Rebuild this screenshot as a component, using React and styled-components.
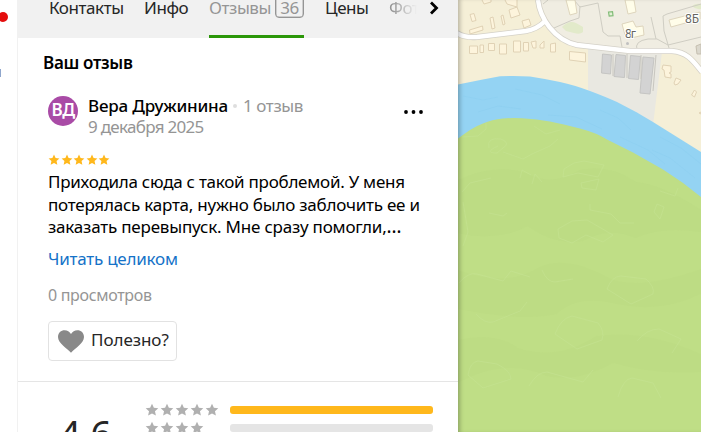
import React from "react";
import styled, { createGlobalStyle } from "styled-components";

const STAR = "M12 1.2l3.2 7 7.6.8-5.7 5.1 1.6 7.5L12 17.8l-6.7 3.8 1.6-7.5L1.2 9l7.6-.8z";
const ROAD = "M457 33Q464 38 477 37L526 31Q537 29 544 22M538 0C540 18 554 40 577 45L630 51H672C686 52 692 59 702 72";

const Stars = ({ count, size, gap, color }) => (
  <StarRow $gap={gap}>
    {Array.from({ length: count }, (_, i) => (
      <svg key={i} width={size} height={size} viewBox="0 0 24 24" fill={color}>
        <path d={STAR} />
      </svg>
    ))}
  </StarRow>
);

const Map = () => (
  <MapSvg viewBox="458 0 243 432">
    <rect x="458" width="243" height="432" fill="#f5efd7" />
    <path d="M540 0H701V66Q690 50 677 51L630 51L575 45Q550 35 540 0z" fill="#f0ede2" />
    <path d="M588 46L662 52L653 125L588 92z" fill="#e9e8e1" />
    <path d="M562 27q7-7 14-4l7 4v5q-3 3-9 1l-8-2zM692 6q4-3 9-2v5q-5 1-9-3z" fill="#e2eaca" />
    <path d="M458 84.500Q480 80 500 76.300Q515 75.500 530 76.500Q546 79 560 82T590 91T617 102L637 112.500L653 122L701 152V200H458z" fill="#94d3f3" />
    <g fill="none" stroke="#87caee" strokeWidth="1" opacity=".35">
      <path d="M463 96l20 4 15-3M478 112l20-6 23 3M515 89l27 6 18 9M548 115l28 2 26 12M600 110l18 8 13 12M620 137l28 13 17 14M652 150l18 8 25 20M660 137l21 11 20 16" />
    </g>
    <path d="M458 138.500Q464 134 470 130T483 123.500Q492 119.500 503 118.500T522 118.300Q537 119 550 121.500T580 128.500T607 139.500L633 152.500L663 169.500Q683 182 701 197V432H458z" fill="#bfde86" />
    <g fill="#b8d77f" opacity=".25">
      <path d="M458 180q40-18 70-6 25 13 52-4 30-6 56 12 25 2 65 28v22q-40-6-65 6-28-12-53 3-30 4-55-15-30 16-70 7z" />
      <path d="M458 270q50 18 81-3 28-12 68 10 28 15 94-8v25q-42 20-84 10-40-10-60 10-32 8-99-5z" />
      <path d="M458 340q38-9 60 8 40 13 78-12 50-7 105 18v18q-48 3-88-9-36 20-67 13-40-19-88 7z" />
    </g>
    <g fill="none" stroke="#c8e497" strokeWidth="1" strokeLinejoin="round" opacity=".45">
      <path d="M486 123v6l-8 7-16 1M489 148q-3-11 12-9 10 4 2 9l-6 5q-14 0 1-7M503 152l20 7 9-5 18-8 8-7M534 126l12 8 14-4M462 192l8-9 21-5M520 178l2-8 9 5M532 184l3-10 7 8M564 169l10-6 10-2 20 4-6 12-20-4-15 4zM581 183l18-4-3 11-14-2zM590 204v6l21 4 9 9h14M657 204l7 3-4 12-6-7zM558 229l14-8 15-1 26 15-10 7-17-7-14 8-13-5zM463 202l5 30-5 14M489 213l14 3 4-3M660 191l15 5 3-8" />
      <path d="M459 283q9-11 18-9l26 7 8-10 19 6M542 270q5 12 13 12l18-3M607 289q5-13 14-13l25 3q9 8 7 15l-22 10zM476 314q9 10 17 8l27-11 7-9M555 334q6-16 17-18l26 7q7 8 4 17l-25 9zM637 341q10-12 22-12l22 10-9 14M468 375q2-13 10-14l19 3q14 7 14 15l-28 9zM529 386q8-14 18-14l36 10 10-12M618 397q5-18 14-19l21 5 8 15" />
    </g>
    <g fill="none" stroke="#cfcdc3" strokeWidth="1">
      <path d="M543 4l5-4M554 28l16-7 9-3 1-12M574 0l6 7 18-4 5 29 5 4 12 0 2 11M651 17l5 22M663 16l4-2 34-10M663 16l1 15 5 17M637 50q-3-9 11-11h9l11 6 33-8" />
    </g>
    <g fill="none">
      <path d={ROAD} stroke="#d4d1c8" strokeWidth="6" />
      <path d={ROAD} stroke="#fff" strokeWidth="4.400" />
    </g>
    <g fill="#fdf4dc" stroke="#e0d2b5" strokeWidth="1">
      <path d="M470 14.500l4-1 2 7-4 1zM482 0l2 4 7-2v-2M505 0l2 4 10 3v-7M509 10l8-3 3 8-9 3zM490 18l3-1 2 11-3 1zM501 16l2-1 2 9-2 1zM522 21l7-2 2 6-7 3zM469.500 30l13-4 .5 4-13 4z" />
      <path d="M469.500 46h8v7.500h-8zM480 45h3.500v7.500h-3.500zM488.500 43.500h6v7h-6zM499.500 44h7v10h-7zM513.500 41h7v11h-7zM523.500 42.500h5v8.500h-5zM531 42l5-1v7h-3zM540 45l4-4v7h-4zM550.500 44l5-1v9h-5z" />
      <path d="M569.500 51.500l16 1.500v9l-16-2zM663 65l8 1v6l-2 1 2 1v4l-6-1-1-7-2-1zM674 83l2-5 5 2-3 4-3 1zM691.500 95l3-5 2 2-2 5zM699 113l2-1v2z" />
    </g>
    <g fill="#fffde9" stroke="#ded5bd">
      <path d="M566 0l4 15 7-2-2-13zM625 0l3 14 8-2-2-12zM622 24l11-3 3 6 7-1 1 9-13 3-6-3zM669 20l31-8v7l-29 8z" />
    </g>
    <g fill="#d3d3d3" stroke="#c5c5c3">
      <path d="M602.500 54l9 1-1 19-9-1zM616 54.500l9.500 1-1 22-10.500-1zM630.500 55.500l10 1-2 23-10-1zM643 57l11 1-4 36-10-1z" />
    </g>
    <path d="M613 54v22M627 54v24M641 55v24M656 55l-3 36" fill="none" stroke="#c8c6bf" />
    <path d="M608.500 12l4-.3.500 4-3.800.3z" fill="#e3efd5" stroke="#82bd78" strokeWidth="1.200" />
    <circle cx="627.500" cy="43.500" r="1.500" fill="#c0c0c0" />
    <path d="M696 46l5-2v10l-4 0z" fill="#dbd8cd" stroke="#c5bfb0" />
    <g fill="#66665f" stroke="#fff" strokeWidth="2" paintOrder="stroke" fontFamily="Noto Sans, sans-serif" fontSize="12">
      <text x="625" y="37.500" textLength="11">8г</text>
      <text x="685" y="23" textLength="14">8Б</text>
    </g>
  </MapSvg>
);

const App = () => {
  return (
    <>
      <GlobalStyle />
      <Page>
        <Rail>
          <RedDot />
          <RailMark />
        </Rail>
        <Panel>
          <Tabs>
            <Tab $w={75}>Контакты</Tab>
            <Tab $w={45}>Инфо</Tab>
            <Tab $w={95} $active>
              Отзывы<Count>36</Count>
            </Tab>
            <Tab $w={44}>Цены</Tab>
            <Tab $w={28} $faded>Фото</Tab>
            <Arrow width="10" height="14" viewBox="0 0 10 14">
              <path d="M2 1.500L7.500 7 2 12.500" fill="none" stroke="#000" strokeWidth="2.800" />
            </Arrow>
          </Tabs>
          <Heading>Ваш отзыв</Heading>
          <Review>
            <Author>
              <Avatar>ВД</Avatar>
              <AuthorInfo>
                <NameLine>
                  <Name>Вера Дружинина</Name>
                  <Dot />
                  <Muted $ls={-0.4}>1 отзыв</Muted>
                </NameLine>
                <Muted $ls={-0.7}>9 декабря 2025</Muted>
              </AuthorInfo>
              <More width="20" height="6" viewBox="0 0 20 6">
                <circle cx="3" cy="3" r="1.900" />
                <circle cx="10.500" cy="3" r="1.900" />
                <circle cx="18" cy="3" r="1.900" />
              </More>
            </Author>
            <Stars count={5} size={12} gap={0.6} color="#ffb81c" />
            <Text>
              <Line $ls={-0.25}>Приходила сюда с такой проблемой. У меня</Line>
              <Line $ls={-0.23}>потерялась карта, нужно было заблочить ее и</Line>
              <Line $ls={-0.2}>
                заказать перевыпуск. Мне сразу помогли,<Ellipsis>…</Ellipsis>
              </Line>
            </Text>
            <ReadMore>Читать целиком</ReadMore>
            <Views>0 просмотров</Views>
            <Useful>
              <svg width="26" height="23" viewBox="0 0 26 23" fill="#898989">
                <path d="M13 22.700C9 18.500 0 13 0 7 0 2.900 3 .3 6.600.3c2.700 0 5 1.500 6.400 3.700C14.400 1.800 16.700.3 19.400.3 23 .3 26 2.900 26 7c0 6-9 11.500-13 15.700z" />
              </svg>
              <span>Полезно?</span>
            </Useful>
          </Review>
          <Summary>
            <Rating>4.6</Rating>
            <Bars>
              <BarRow>
                <Stars count={5} size={14} gap={0.9} color="#b0b0b0" />
                <Bar $color="#ffb81c" />
              </BarRow>
              <BarRow>
                <Stars count={4} size={14} gap={0.9} color="#b0b0b0" />
                <Bar $color="#e5e5e5" />
              </BarRow>
            </Bars>
          </Summary>
        </Panel>
        <MapArea>
          <Map />
        </MapArea>
      </Page>
    </>
  );
};

export default App;

const GlobalStyle = createGlobalStyle`
  * {
    box-sizing: border-box;
  }

  body {
    margin: 0;
    overflow: hidden;
    font-family: "Noto Sans", "Open Sans", sans-serif;
    font-size: 17px;
    color: #000;
    background: #fff;
  }

  svg {
    display: block;
    flex: none;
  }
`;

const Page = styled.div`
  display: flex;
  width: 701px;
  height: 432px;
  overflow: hidden;
`;

const Rail = styled.div`
  width: 18px;
  flex: none;
  overflow: hidden;
  border-right: 1px solid #f1f1f1;
  padding-top: 12px;
`;

const RedDot = styled.div`
  width: 10px;
  height: 10px;
  border-radius: 50%;
  background: #e40d0d;
  margin-left: -2px;
`;

const RailMark = styled.div`
  width: 1px;
  height: 8px;
  margin-top: 47px;
  background: #8fa6cc;
`;

const Panel = styled.div`
  width: 440px;
  height: 432px;
  flex: none;
  display: flex;
  flex-direction: column;
  overflow: hidden;
`;

const Tabs = styled.div`
  display: flex;
  flex: none;
  gap: 20px;
  height: 38px;
  padding-left: 31px;
  background: #f1f1f1;
`;

const Tab = styled.div`
  display: flex;
  flex: none;
  width: ${(p) => p.$w}px;
  height: 38px;
  line-height: 15px;
  white-space: nowrap;
  letter-spacing: -0.42px;
  color: ${(p) => (p.$active || p.$faded ? "#959595" : "#262626")};
  border-bottom: ${(p) => (p.$active ? "3px solid #2b9708" : "none")};
  overflow: ${(p) => (p.$faded ? "hidden" : "visible")};
  mask-image: ${(p) => (p.$faded ? "linear-gradient(90deg, #000 10%, transparent)" : "none")};

  &:nth-child(4) {
    margin-left: 1px;
  }
`;

const Count = styled.span`
  width: 29px;
  height: 24px;
  margin: -6px 0 0 auto;
  padding-top: 5px;
  border: 1px solid #959595;
  box-shadow: inset 0 0 0 0.5px #a8a8a8;
  border-radius: 4px;
  text-align: center;
`;

const Arrow = styled.svg`
  margin: 1px 0 0 -8px;
`;

const Heading = styled.div`
  height: 57px;
  flex: none;
  padding: 13px 0 0 25px;
  line-height: 24px;
  font-weight: 600;
  letter-spacing: -0.3px;
`;

const Review = styled.div`
  height: 287px;
  flex: none;
  padding: 1px 30px 0;
  border-bottom: 1px solid #e5e5e5;
`;

const Author = styled.div`
  display: flex;
  height: 58px;
`;

const Avatar = styled.div`
  width: 30px;
  height: 30px;
  border-radius: 50%;
  background: #a94ba6;
  color: #fff;
  font-weight: 600;
  line-height: 27px;
  text-align: center;
  letter-spacing: -0.5px;
`;

const AuthorInfo = styled.div`
  margin-left: 10px;
  margin-top: -1px;
  line-height: 21px;
`;

const NameLine = styled.div`
  display: flex;
  align-items: center;
  height: 21px;
`;

const Name = styled.div`
  width: 140px;
  font-weight: 500;
  white-space: nowrap;
  letter-spacing: -0.2px;
`;

const Dot = styled.div`
  width: 4px;
  height: 4px;
  margin: 0 6px 0 5px;
  border-radius: 50%;
  background: #dedede;
`;

const Muted = styled.div`
  color: #959595;
  white-space: nowrap;
  letter-spacing: ${(p) => p.$ls}px;
`;

const More = styled.svg`
  margin: 13px 5px 0 auto;
`;

const StarRow = styled.div`
  display: flex;
  gap: ${(p) => p.$gap}px;
`;

const Text = styled.div`
  margin-top: 5px;
`;

const Line = styled.div`
  height: 22.700px;
  line-height: 22.700px;
  white-space: nowrap;
  letter-spacing: ${(p) => p.$ls}px;
`;

const Ellipsis = styled.span`
  font-size: 19px;
  line-height: 1;
`;

const ReadMore = styled.div`
  height: 22px;
  margin-top: 9px;
  line-height: 22px;
  letter-spacing: -0.23px;
  color: #1572c8;
`;

const Views = styled.div`
  height: 22px;
  margin-top: 14px;
  line-height: 22px;
  letter-spacing: -0.32px;
  font-size: 16px;
  color: #959595;
`;

const Useful = styled.div`
  display: flex;
  align-items: center;
  gap: 7px;
  width: 129px;
  height: 40px;
  margin-top: 15px;
  padding-left: 9px;
  border: 1px solid #e2e2e2;
  border-radius: 4px;
  color: #262626;
  letter-spacing: -0.05px;

  span {
    margin-top: -4px;
  }
`;

const Summary = styled.div`
  display: flex;
  flex: none;
  height: 80px;
`;

const Rating = styled.div`
  width: 128px;
  padding: 28px 0 0 41px;
  font-size: 38px;
  line-height: 46px;
  letter-spacing: -0.3px;
  color: #262626;
`;

const Bars = styled.div`
  padding-top: 19px;
`;

const BarRow = styled.div`
  display: flex;
  align-items: center;
  justify-content: space-between;
  width: 288px;
  height: 18px;
  margin-left: -1px;
`;

const Bar = styled.div`
  width: 203px;
  height: 8px;
  border-radius: 3px;
  background: ${(p) => p.$color};
`;

const MapArea = styled.div`
  width: 243px;
  height: 432px;
  box-shadow: inset 4px 0 4px -2px rgba(0, 0, 0, 0.25);
`;

const MapSvg = styled.svg`
  width: 243px;
  height: 432px;
  position: relative;
  z-index: -1;
`;
